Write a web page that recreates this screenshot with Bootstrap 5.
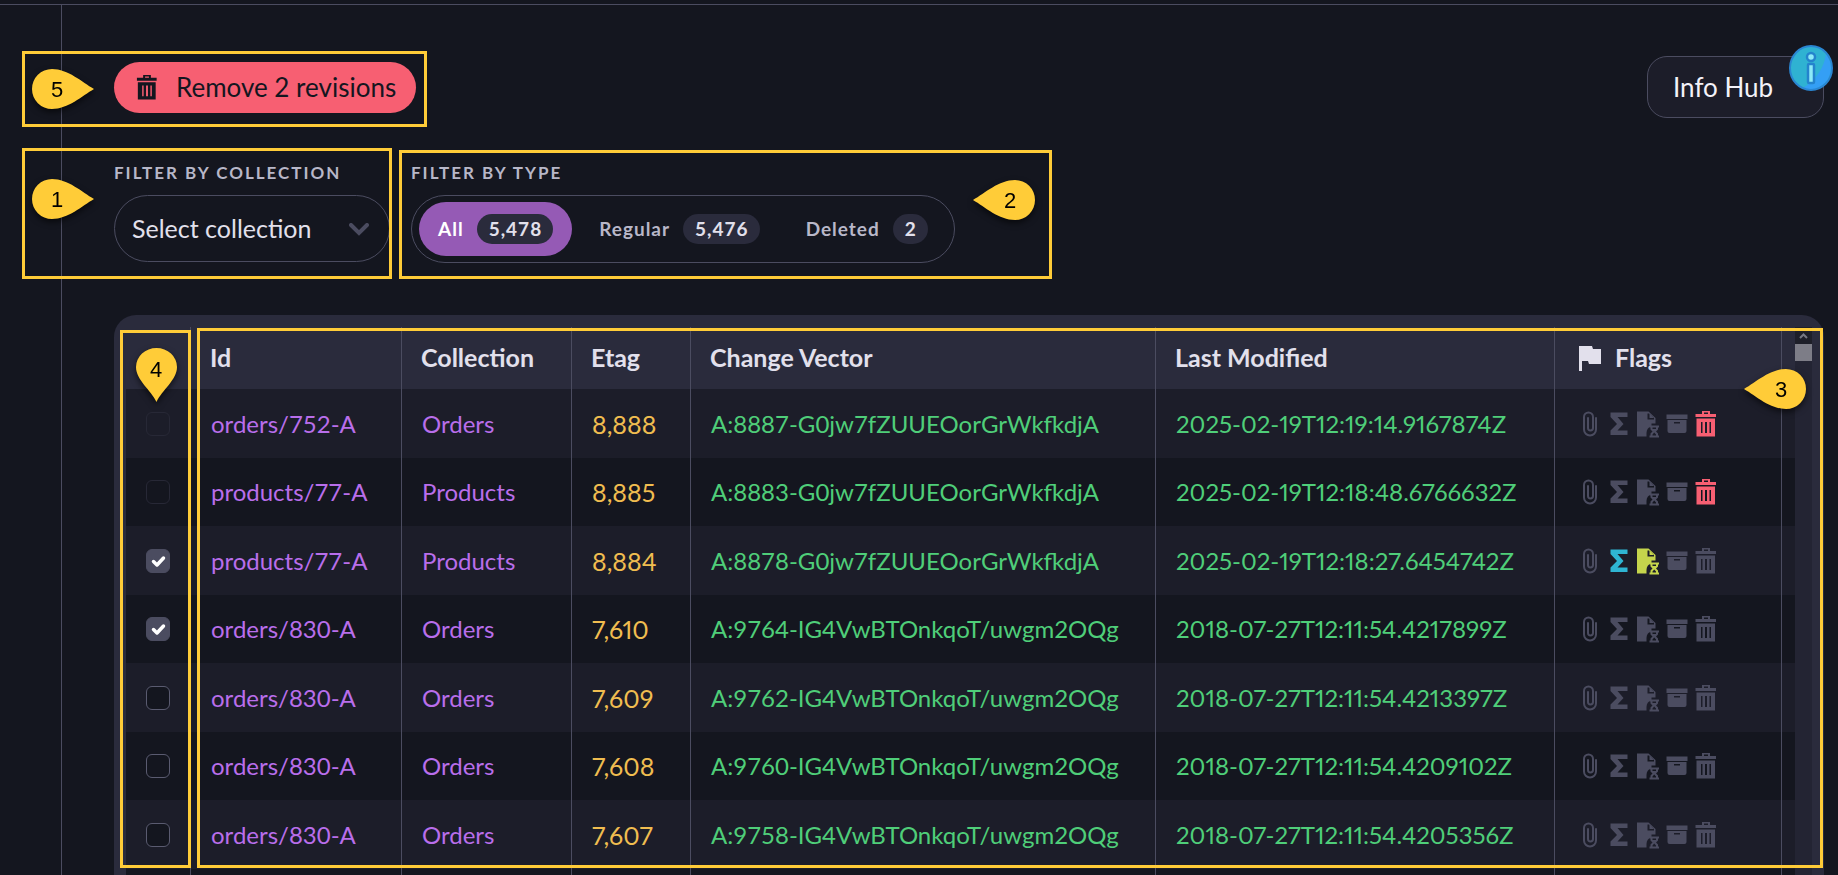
<!DOCTYPE html>
<html lang="en">
<head>
<meta charset="utf-8">
<meta name="viewport" content="width=device-width, initial-scale=1">
<title>Revisions</title>
<link href="https://cdn.jsdelivr.net/npm/bootstrap@5.3.0/dist/css/bootstrap.min.css" rel="stylesheet">
<style>
:root{--bg:#14161f;--row:#1c1d29;--panel:#2a2b3c;--line:#4b4c60;--mark:#ffcc38;--muted:#b8b7c8;--text:#e2e0ec}
body{background:var(--bg);color:var(--text);font-family:Lato,"Open Sans",sans-serif;font-size:24px}
.topline{height:5px;border-bottom:1px solid var(--line)}
.shell{min-height:0}
.rail{width:62px;border-right:1px solid var(--line)}
.workspace{padding:57px 14px 0 52px;min-width:0}
.frame{position:absolute;border:3px solid var(--mark);pointer-events:none}
.frame-remove{inset:-11px -11px -14px -92px}
.frame-coll{inset:-15px -2px -17px -92px}
.frame-type{inset:-13px -97px -16px -12px}
.frame-check{left:6px;top:15px;width:71px;height:538px}
.frame-rows{left:83px;right:1px;top:13px;height:540px}
.pin{position:absolute;width:62px;height:40px;filter:drop-shadow(0 3px 3px rgba(0,0,0,.6));fill:var(--mark)}
.pin text{font-family:"Liberation Sans",Arial,sans-serif;font-size:22px;text-anchor:middle;fill:#000}
.pin-5{left:-82px;top:7px}
.pin-1{left:-82px;top:16px}
.pin-2{right:-80px;top:17px}
.pin-3{right:18px;top:54px}
.pin-4{left:22px;top:33px;width:41px;height:54px}
.btn-remove{background:#f75f72;color:#14161f;font-size:26px;line-height:27px;padding:12px 20px;border:0;gap:16px}
.btn-remove:hover{background:#f75f72;color:#14161f}
.btn-info-hub{background:var(--row);border:1px solid var(--line);border-radius:20px;color:#f3f2f8;font-size:26px;width:177px;height:62px;padding:0 24px 0 25px;text-align:left;margin-top:-6px}
.info-dot{position:absolute;right:-9px;top:-17px;width:44px;height:46px}
.filters{margin-top:45px;gap:21px}
.caption{display:block;font-size:17px;line-height:20px;font-weight:700;letter-spacing:2px;text-transform:uppercase;color:var(--muted);margin-bottom:12px}
.pick{appearance:none;width:276px;height:67px;border:1px solid var(--line);border-radius:34px;background:transparent;color:var(--text);font-size:25px;padding:0 17px}
.pick-arrow{position:absolute;right:21px;bottom:26px;width:20px;height:13px;pointer-events:none}
.segments{height:68px;border:1px solid var(--line);border-radius:34px;padding:6px 7px;gap:8px}
.segments label{height:54px;border-radius:27px;padding:0 19px;gap:13px;font-size:19px;font-weight:700;letter-spacing:1px;color:var(--muted);cursor:pointer}
.segments .btn-check:checked+label{background:#955ab5;color:#fff}
.count{background:var(--panel);color:var(--text);border-radius:15px;height:30px;line-height:30px;padding:0 11px 0 12px}
.sheet{margin-top:52px;background:var(--panel);border-radius:22px 22px 0 0;padding:12px 12px 0}
.grid{table-layout:fixed;width:100%;border-collapse:separate;border-spacing:0;background:var(--bg)}
.grid th{height:62px;background:var(--panel);font-size:25px;font-weight:700;border-right:1px solid var(--line);padding:0 20px 0 19px;white-space:nowrap}
.grid td{height:68px;border-right:1px solid var(--line);padding:0 20px;white-space:nowrap;line-height:28px}
.grid tr:nth-child(odd) td{height:69px;background:var(--row)}
.grid tr:nth-child(odd){--fold:var(--row)}
.grid th:last-child,.grid td:last-child{border-right:0;padding:0}
.grid a{color:#b96eeb;text-decoration:none}
.num{color:#f0bd50;font-size:25px}
.str{color:#4fce79}
.num,.stamp{font-variant-numeric:proportional-nums}
.grid td:first-child{text-align:center}
.tick{appearance:none;display:block;margin:0 auto;width:24px;height:24px;border:1px solid #5a5b70;border-radius:6px;background:var(--bg)}
.tick:disabled{border-color:#272836;background:transparent}
.tick:checked{background:#4b4c60 url("data:image/svg+xml,%3Csvg xmlns='http://www.w3.org/2000/svg' viewBox='0 0 24 24'%3E%3Cpath d='M7.500 12.500l3.500 3.500 6.500-7' fill='none' stroke='white' stroke-width='3.500' stroke-linecap='round' stroke-linejoin='round'/%3E%3C/svg%3E") center/24px;border-color:#4b4c60}
.marks{color:#4b4c60;padding-left:4px}
.marks svg{width:22px;height:28px;margin-right:7px;display:block}
.bar{width:17px;background:#232433}
.bar-up{height:17px;background:#1e1f29}
.bar-thumb{height:17px;background:#7d7d87}
</style>
</head>
<body class="vh-100 overflow-hidden d-flex flex-column">
<svg width="0" height="0" class="position-absolute" aria-hidden="true">
<symbol id="trash" viewBox="0 0 22 28"><path fill="currentColor" fill-rule="evenodd" d="M0.500 4H7V1H15V4H21V7H0.500ZM9 4H13V2.500H9ZM1.500 8.500H20V26.500H1.500ZM6 12V23H7.500V12ZM10 12V23H12V12ZM14.500 12V23H16V12Z"/></symbol>
<symbol id="clip" viewBox="0 0 22 28"><path fill="none" stroke="currentColor" stroke-width="2" stroke-linecap="round" d="M17 8V19.500A6 6 0 0 1 5 19.500V7A4.500 4.500 0 0 1 14 7V18A2.500 2.500 0 0 1 9 18V8"/></symbol>
<symbol id="sigma" viewBox="0 0 22 28"><path fill="currentColor" d="M2.500 2.500H19.500V7H9.500L15.500 14L9.500 20.500H19.500V25H2.500V20.500L9 14L2.500 7Z"/></symbol>
<symbol id="doc" viewBox="0 0 22 28"><path fill="currentColor" d="M0 1.500H11.500L18.500 8V13.500H14.500V16Q9.500 18 9.500 23V26.500H0Z"/><path fill="var(--fold,var(--bg))" d="M10.500 3.500H12L17 8V9.500H10.500Z"/><path fill="currentColor" d="M12.500 3.500L17 8H12.500Z"/><path fill="currentColor" fill-rule="evenodd" d="M12.500 15.500H22V17.500H21V19.500L19 21.500L21 23.500V25.500H22V27.500H12.500V25.500H13.500V23.500L15.500 21.500L13.500 19.500V17.500H12.500ZM15.500 17.500V19H19V17.500ZM17.200 22.500L15.500 24.500V25.500H19V24.500Z"/></symbol>
<symbol id="box" viewBox="0 0 22 28"><path fill="currentColor" fill-rule="evenodd" d="M0.500 4.500H21.500V9H0.500ZM1.500 10H20.500V21Q20.500 23 18.500 23H3.500Q1.500 23 1.500 21ZM8 12V13.500H14V12Z"/></symbol>
<symbol id="drop" viewBox="0 0 62 40"><path d="M62 20C50 13 36 0 20 0A20 20 0 0 0 20 40C36 40 50 27 62 20Z"/></symbol>
</svg>
<div class="topline flex-shrink-0"></div>
<div class="shell d-flex flex-grow-1 overflow-hidden">
<aside class="rail flex-shrink-0"></aside>
<main class="workspace flex-grow-1">
<header class="d-flex justify-content-between align-items-start">
<div class="position-relative">
<button type="button" class="btn btn-remove rounded-pill d-flex align-items-center"><svg width="26" height="27" viewBox="0 0 22 28"><use href="#trash"/></svg>Remove 2 revisions</button>
<div class="frame frame-remove"></div>
<svg class="pin pin-5" viewBox="0 0 62 40"><use href="#drop"/><text x="25" y="28">5</text></svg>
</div>
<div class="position-relative">
<button type="button" class="btn btn-info-hub">Info Hub</button>
<svg class="info-dot" viewBox="0 0 44 46"><ellipse cx="22" cy="23" rx="21" ry="22" fill="#2fb2d2"/><path d="M37 9Q34 30 14 43Q22 47 31 42Q42 35 42 23Q42 15 37 9Z" fill="#349ff5"/><ellipse cx="22" cy="23" rx="21" ry="22" fill="none" stroke="#2a86d2" stroke-width="2"/><circle cx="22" cy="12" r="4" fill="#8deaf8" stroke="#2483cd" stroke-width="2.500"/><rect x="19" y="19" width="6" height="19" rx="1" fill="#8deaf8" stroke="#2483cd" stroke-width="2.500"/></svg>
</div>
</header>
<section class="filters d-flex align-items-start">
<div class="position-relative">
<label class="caption" for="coll">Filter by collection</label>
<select id="coll" class="pick d-block"><option>Select collection</option></select>
<svg class="pick-arrow" viewBox="0 0 20 13"><path d="M2 2L10 10L18 2" fill="none" stroke="#4b4c60" stroke-width="4" stroke-linecap="round"/></svg>
<div class="frame frame-coll"></div>
<svg class="pin pin-1" viewBox="0 0 62 40"><use href="#drop"/><text x="25" y="28">1</text></svg>
</div>
<div class="position-relative">
<span class="caption" id="kind">Filter by type</span>
<div class="segments d-flex" role="group" aria-labelledby="kind">
<input class="btn-check" type="radio" name="t" id="t1" checked><label for="t1" class="d-flex align-items-center">All<span class="count">5,478</span></label>
<input class="btn-check" type="radio" name="t" id="t2"><label for="t2" class="d-flex align-items-center">Regular<span class="count">5,476</span></label>
<input class="btn-check" type="radio" name="t" id="t3"><label for="t3" class="d-flex align-items-center">Deleted<span class="count">2</span></label>
</div>
<div class="frame frame-type"></div>
<svg class="pin pin-2" viewBox="0 0 62 40"><use href="#drop" transform="matrix(-1 0 0 1 62 0)"/><text x="37" y="28">2</text></svg>
</div>
</section>
<section class="sheet position-relative d-flex">
<table class="grid">
<colgroup><col style="width:65px"><col style="width:211px"><col style="width:170px"><col style="width:119px"><col><col style="width:399px"><col style="width:227px"><col style="width:13px"></colgroup>
<thead><tr><th></th><th>Id</th><th>Collection</th><th>Etag</th><th>Change Vector</th><th>Last Modified</th><th><span class="d-flex align-items-center"><svg width="33" height="28" viewBox="0 0 33 28" class="me-2"><path fill="currentColor" d="M5 2H18L19 5H27V20H15L14 17H8V27H5Z"/></svg>Flags</span></th><th></th></tr></thead>
<tbody id="rows"></tbody>
</table>
<div class="bar flex-shrink-0"><div class="bar-up d-flex justify-content-center align-items-center"><svg width="9" height="6" viewBox="0 0 9 6"><path d="M1 5L4.500 1.500L8 5" fill="none" stroke="#777883" stroke-width="2"/></svg></div><div class="bar-thumb"></div></div>
<div class="frame frame-check"></div>
<div class="frame frame-rows"></div>
<svg class="pin pin-4" viewBox="0 0 41 54"><path d="M20.500 54C15 42 0 32 0 19A20.500 19 0 0 1 41 19C41 32 26 42 20.500 54Z"/><text x="20" y="29">4</text></svg>
<svg class="pin pin-3" viewBox="0 0 62 40"><use href="#drop" transform="matrix(-1 0 0 1 62 0)"/><text x="37" y="28">3</text></svg>
</section>
</main>
</div>
<script>
const data=[
['orders/752-A','Orders','8,888','A:8887-G0jw7fZUUEOorGrWkfkdjA','2025-02-19T12:19:14.9167874Z','disabled','del'],
['products/77-A','Products','8,885','A:8883-G0jw7fZUUEOorGrWkfkdjA','2025-02-19T12:18:48.6766632Z','disabled','del'],
['products/77-A','Products','8,884','A:8878-G0jw7fZUUEOorGrWkfkdjA','2025-02-19T12:18:27.6454742Z','checked','cnt'],
['orders/830-A','Orders','7,610','A:9764-IG4VwBTOnkqoT/uwgm2OQg','2018-07-27T12:11:54.4217899Z','checked',''],
['orders/830-A','Orders','7,609','A:9762-IG4VwBTOnkqoT/uwgm2OQg','2018-07-27T12:11:54.4213397Z','',''],
['orders/830-A','Orders','7,608','A:9760-IG4VwBTOnkqoT/uwgm2OQg','2018-07-27T12:11:54.4209102Z','',''],
['orders/830-A','Orders','7,607','A:9758-IG4VwBTOnkqoT/uwgm2OQg','2018-07-27T12:11:54.4205356Z','','']];
const icon=(n,c)=>`<svg${c?` style="color:${c}"`:''}><use href="#${n}"/></svg>`;
document.getElementById('rows').innerHTML=data.map(r=>`<tr><td><input class="tick" type="checkbox" aria-label="Select revision ${r[2]}" ${r[5]}></td><td><a href="#">${r[0]}</a></td><td><a href="#">${r[1]}</a></td><td class="num">${r[2]}</td><td class="str">${r[3]}</td><td class="str stamp">${r[4]}</td><td><span class="marks d-flex">${icon('clip')}${icon('sigma',r[6]=='cnt'&&'#2fb5d3')}${icon('doc',r[6]=='cnt'&&'#c5d54c')}${icon('box')}${icon('trash',r[6]=='del'&&'#f75f72')}</span></td><td></td></tr>`).join('')+'<tr>'+'<td></td>'.repeat(8)+'</tr>';
</script>
<script src="https://cdn.jsdelivr.net/npm/bootstrap@5.3.0/dist/js/bootstrap.bundle.min.js"></script>
</body>
</html>
